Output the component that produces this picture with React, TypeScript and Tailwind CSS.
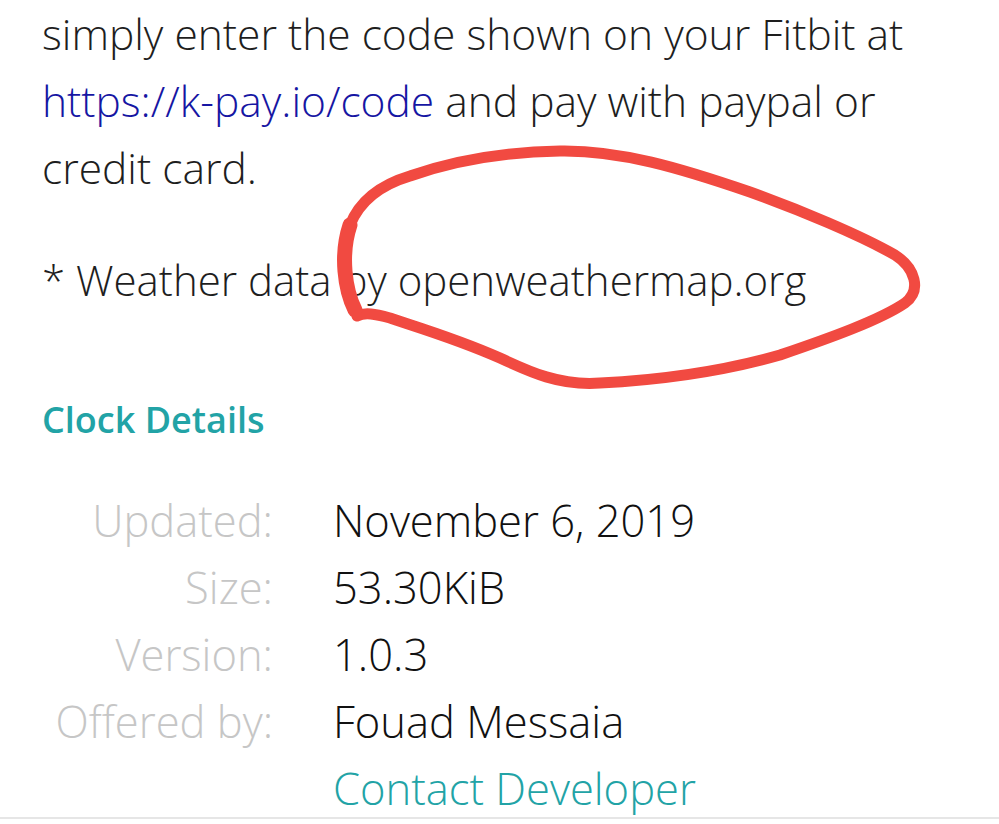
const font = { fontFamily: "'Open Sans', Lato, sans-serif" };

const details: [string, string][] = [
  ["Updated:", "November 6, 2019"],
  ["Size:", "53.30KiB"],
  ["Version:", "1.0.3"],
  ["Offered by:", "Fouad Messaia"],
];

// hand-drawn red loop laid over the screenshot
function Scribble() {
  return (
    <svg className="absolute inset-0 pointer-events-none" width="999" height="824" viewBox="0 0 999 824">
      <path
        d="M357 314 C345 290 340 255 350 225 C360 200 380 185 410 176 C450 162 500 152 560 151 C620 150 680 168 750 192 C800 210 860 235 895 255 C915 268 922 290 905 303 C880 320 830 338 780 355 C720 372 660 380 600 383 C560 386 530 372 500 358 C460 340 420 328 390 318 C375 314 365 312 357 316"
        fill="none"
        stroke="#f14a41"
        strokeWidth="11"
        strokeLinecap="round"
        strokeLinejoin="round"
      />
      {/* heavier left side of the loop */}
      <path d="M355 310 C345 290 340 255 350 225" fill="none" stroke="#f14a41" strokeWidth="15" strokeLinecap="round" />
    </svg>
  );
}

export default function App() {
  return (
    <div className="relative w-[999px] h-[824px] overflow-hidden bg-white text-[#1e1e1e]" style={font}>
      <div className="h-[819px] border-b-2 border-[#e6e6e6] pl-[42px]">
        <p className="text-[42.5px] font-light leading-[67px]">
          simply enter the code shown on your Fitbit at
          <br />
          <span className="text-[#1616a3]">https://k-pay.io/code</span> and pay with paypal or
          <br />
          credit card.
        </p>
        <p className="mt-[45px] text-[42px] font-light leading-[67px]">* Weather data by openweathermap.org</p>

        <h3 className="mt-[85px] text-[36px] font-semibold leading-[44px] text-[#22a3a6]">Clock Details</h3>

        <div className="mt-[45px] grid grid-cols-[231px_1fr] gap-x-[60px] text-[43.5px] font-light leading-[67px]">
          {details.map(([label, value]) => (
            <div key={label} className="contents">
              <span className="text-right text-[#c6c6c6]">{label}</span>
              <span className="text-[#111]">{value}</span>
            </div>
          ))}
          <span />
          <span className="text-[#22a3a6]">Contact Developer</span>
        </div>
      </div>
      <Scribble />
    </div>
  );
}
